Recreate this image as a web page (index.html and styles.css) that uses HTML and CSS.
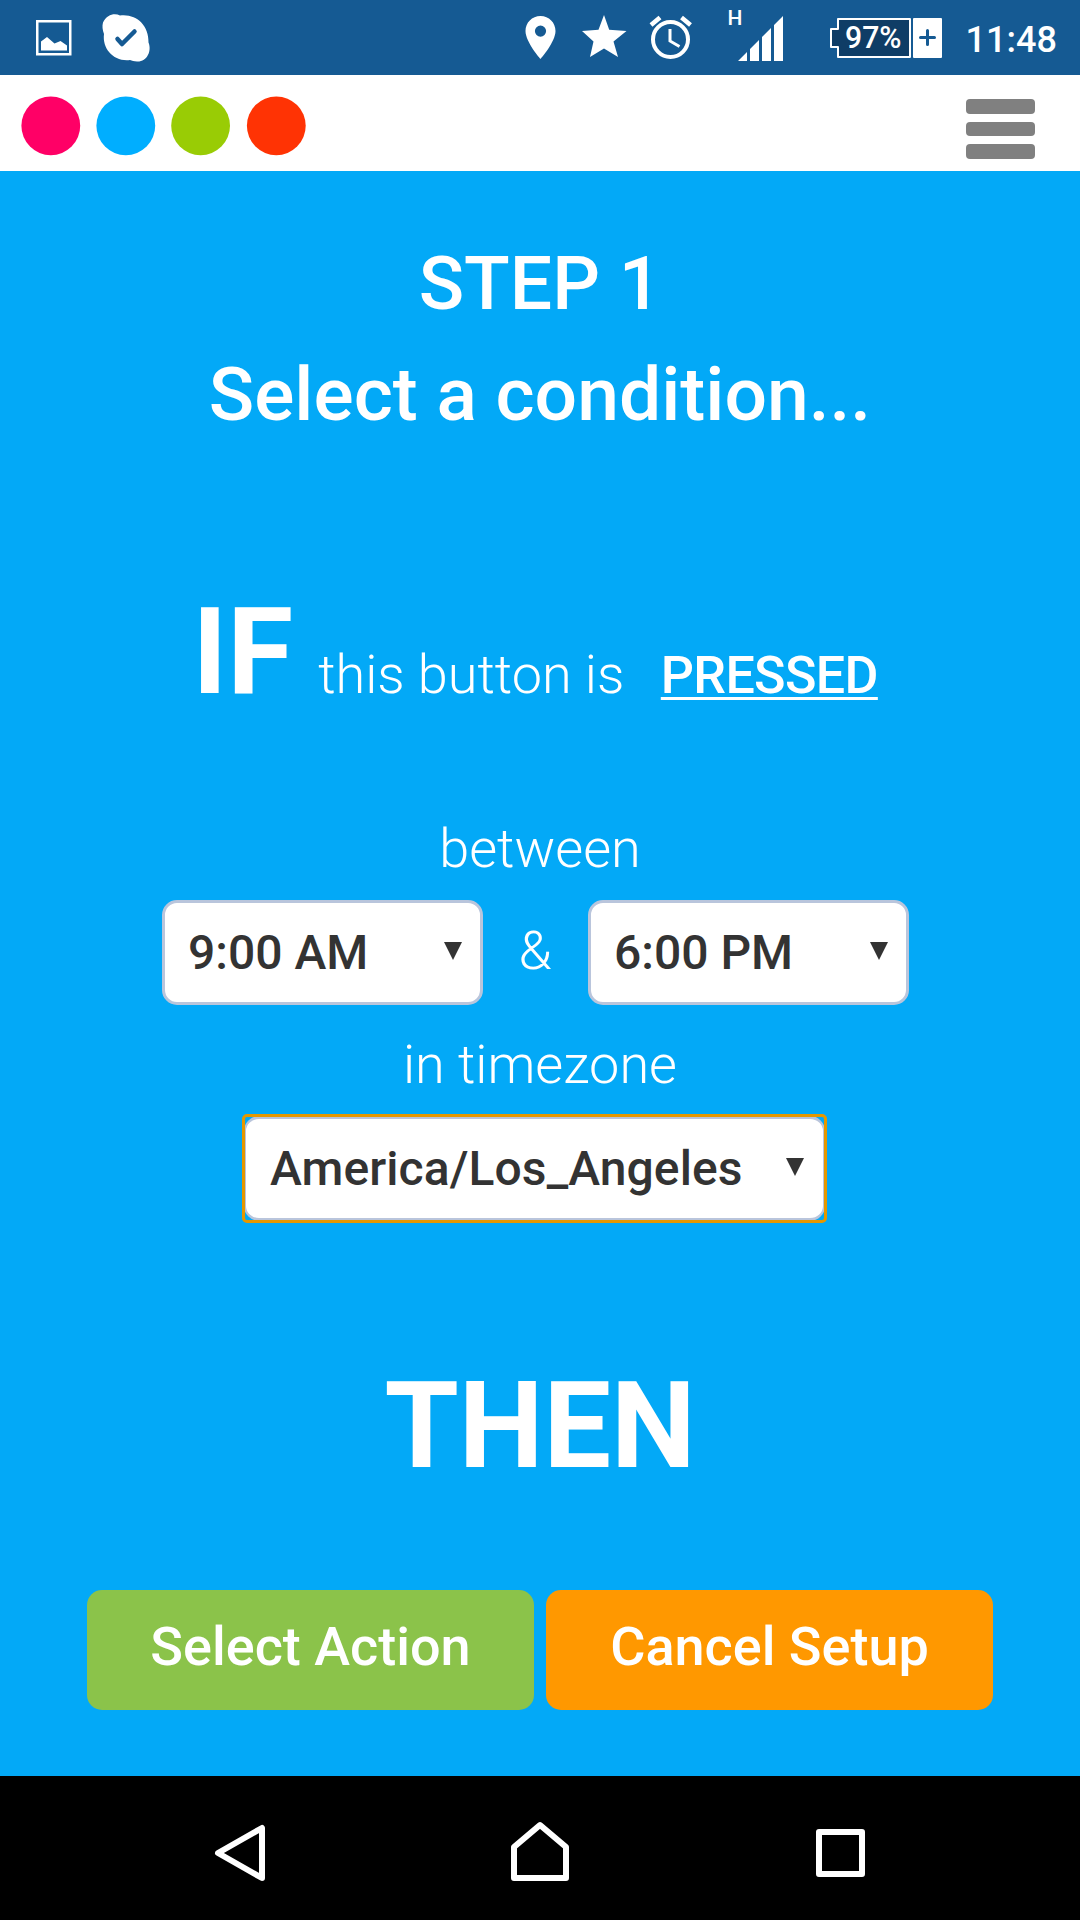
FILE: index.html
```html
<!DOCTYPE html>
<html lang="en">
<head>
<meta charset="utf-8">
<title>Step 1 – Select a condition</title>
<link rel="stylesheet" href="styles.css">
</head>
<body>
<div class="status">
  <svg class="status-left" width="160" height="75" viewBox="0 0 160 75" fill="#fff">
    <path fill-rule="evenodd" d="M36 20h35.500v35.500H36zM38.500 22.500v30.500h30.500v-30.500z"/>
    <path d="M41 50.500V41.500L47 37l7.500 6.500L60.500 41l6.500 4.500V50.500z"/>
    <path d="M103 22.500C107 14 115 13 120 15.500C136 13.500 149 25 148.500 42.500C152 51 147 62 137 61.500C134 61.500 132 60.500 130 60C114 62 102 49 104 34C102.500 30 102 26 103 22.500z"/>
    <path d="M117.500 39l4.500 5L134.500 31.500" fill="none" stroke="#155a93" stroke-width="4.500" stroke-linecap="round" stroke-linejoin="round"/>
  </svg>
  <div class="status-right">
    <svg width="300" height="75" viewBox="520 0 300 75" fill="#fff">
      <path fill-rule="evenodd" d="M540.500 16c-8.500 0-15 6.700-15 15c0 11 15 28 15 28s15-17 15-28c0-8.300-6.500-15-15-15zM540.500 25.500a5.600 5.600 0 1 1 0 11.200a5.600 5.600 0 1 1 0-11.200z"/>
      <path d="M604 15l5.200 14.800L626.500 31l-13 10.500L618 57l-14-8.500L590 57l3.500-15.500L582 31l16.500-1.200z"/>
      <g fill="none" stroke="#fff">
        <circle cx="670.500" cy="39.500" r="17.500" stroke-width="4"/>
        <path d="M670 29v12l9.500 5.500" stroke-width="3"/>
        <path d="M651 25l9-7.500M690.500 25l-9-7.500" stroke-width="4.500"/>
      </g>
      <path d="M738 61l9-9v9zM750 61V49l9-9v21zM762 61V37l9-9v33zM774 61V25l9-9v45z"/>
      <text class="net" x="727.500" y="25">H</text>
    </svg>
    <div class="battery">
      <svg width="114" height="42" viewBox="829 16 114 42">
        <path d="M838 18h72v38h-72v-10h-7V28h7z" fill="#0f3d66" stroke="#fff" stroke-width="2" stroke-linejoin="round"/>
        <rect x="913" y="17" width="29" height="40" rx="1" fill="#fff"/>
        <path d="M920.500 36.500h14M927.500 29.500v14" stroke="#155a93" stroke-width="3" stroke-linecap="round"/>
        <text class="pct" x="845" y="47" textLength="56.500" lengthAdjust="spacingAndGlyphs">97%</text>
      </svg>
    </div>
    <span class="clock">11:48</span>
  </div>
</div>
<header class="topbar">
  <svg width="290" height="61" viewBox="20 95 290 61">
    <circle cx="50.800" cy="125.800" r="29.400" fill="#ff0066"/>
    <circle cx="125.800" cy="125.800" r="29.400" fill="#00aeff"/>
    <circle cx="200.600" cy="125.800" r="29.400" fill="#99cc05"/>
    <circle cx="276.300" cy="125.800" r="29.400" fill="#ff3304"/>
  </svg>
  <div class="menu"><i></i><i></i><i></i></div>
</header>
<main class="content">
  <h1 class="title">STEP 1<br>Select a condition...</h1>
  <div class="if-row">
    <span class="big">IF</span>
    <span class="light this">this button is</span>
    <a class="pressed">PRESSED</a>
  </div>
  <p class="light between">between</p>
  <div class="times">
    <div class="field"><span>9:00 AM</span><svg class="arrow" viewBox="0 0 18 18"><path d="M0 0h18L9 18z"/></svg></div>
    <span class="light amp">&amp;</span>
    <div class="field"><span>6:00 PM</span><svg class="arrow" viewBox="0 0 18 18"><path d="M0 0h18L9 18z"/></svg></div>
  </div>
  <p class="light zone">in timezone</p>
  <div class="focus">
    <div class="field tz"><span>America/Los_Angeles</span><svg class="arrow" viewBox="0 0 18 18"><path d="M0 0h18L9 18z"/></svg></div>
  </div>
  <div class="big then">THEN</div>
  <div class="actions">
    <button class="btn go">Select Action</button>
    <button class="btn cancel">Cancel Setup</button>
  </div>
</main>
<nav class="nav">
  <svg width="1080" height="144" viewBox="0 1776 1080 144" fill="none" stroke="#fff" stroke-width="6" stroke-linejoin="round">
    <path d="M262 1828v50l-44-25z"/>
    <path d="M514 1878v-31l26-22l26 22v31z"/>
    <path d="M819 1832h43v42h-43z"/>
  </svg>
</nav>
</body>
</html>
```
FILE: styles.css
```css
* { box-sizing: border-box; }
body {
  margin: 0;
  width: 1080px;
  height: 1920px;
  overflow: hidden;
  display: flex;
  flex-direction: column;
  font-family: Roboto, sans-serif;
  color: #fff;
  background: #03a9f7;
}
svg { display: block; flex: none; }

.status {
  height: 75px;
  background: #155a93;
  display: flex;
  justify-content: space-between;
}
.status-right { display: flex; align-items: center; padding-right: 25px; }
.net { font: 500 21px Roboto, sans-serif; }
.pct { font: 500 32px Roboto, sans-serif; fill: #fff; }
.battery { margin-left: 9px; }
.clock {
  width: 89.500px;
  margin-left: 22.500px;
  font-size: 36px;
  font-weight: 500;
  line-height: 75px;
  padding-top: 5px;
  white-space: nowrap;
}

.topbar {
  height: 96px;
  background: #fff;
  display: flex;
  justify-content: space-between;
  padding: 20px 45px 0 20px;
}
.menu { display: flex; flex-direction: column; gap: 8px; padding-top: 4px; }
.menu i { width: 69px; height: 14.500px; border-radius: 4px; background: #808080; }

.content {
  height: 1605px;
  padding-top: 57px;
  display: flex;
  flex-direction: column;
  align-items: center;
}
.title {
  margin: 0;
  font-size: 75px;
  font-weight: 500;
  line-height: 111px;
  text-align: center;
}
.if-row {
  margin: 132px 10px 0 0;
  height: 140px;
  display: flex;
  align-items: baseline;
}
.big { font-size: 120px; font-weight: 700; line-height: 140px; }
.light { margin: 0; font-size: 54px; font-weight: 300; line-height: 63px; }
.this { margin-left: 25px; }
.pressed {
  margin-left: 36.500px;
  font-size: 52px;
  font-weight: 500;
  letter-spacing: -0.650px;
  line-height: 63px;
  text-decoration: underline;
  text-decoration-thickness: 3px;
  text-underline-offset: 4px;
  text-decoration-skip-ink: none;
}
.between { margin-top: 95px; }
.times {
  margin-top: 20px;
  width: 747px;
  margin-right: 9px;
  display: flex;
  justify-content: space-between;
  align-items: center;
}
.amp { padding: 0 1px 4px 0; }
.field {
  width: 321px;
  height: 105px;
  border: 3px solid #b9c5dc;
  border-radius: 15px;
  background: #fff;
  color: #333;
  display: flex;
  justify-content: space-between;
  padding: 0 18px 0 23px;
  font-size: 48px;
  font-weight: 500;
  line-height: 100px;
  white-space: nowrap;
}
.arrow { width: 18px; height: 18px; margin-top: 39px; fill: #333; }
.zone { margin-top: 28px; }
.focus {
  margin: 20px 11px 0 0;
  border-radius: 3px;
  outline: 3px solid #e59700;
  outline-offset: -1px;
}
.tz {
  width: 581px;
  border-width: 3px 2px;
  padding: 0 19px 0 24px;
  letter-spacing: 0.090px;
}
.then { margin-top: 135px; }
.actions { margin-top: 94px; display: flex; gap: 12px; }
.btn {
  width: 447px;
  height: 120px;
  border: 0;
  border-radius: 15px;
  padding: 0 0 8px;
  color: #fff;
  font: 500 54px/63px Roboto, sans-serif;
}
.go { background: #8bc34a; }
.cancel { background: #ff9800; }
.nav { height: 144px; background: #000; }
```
